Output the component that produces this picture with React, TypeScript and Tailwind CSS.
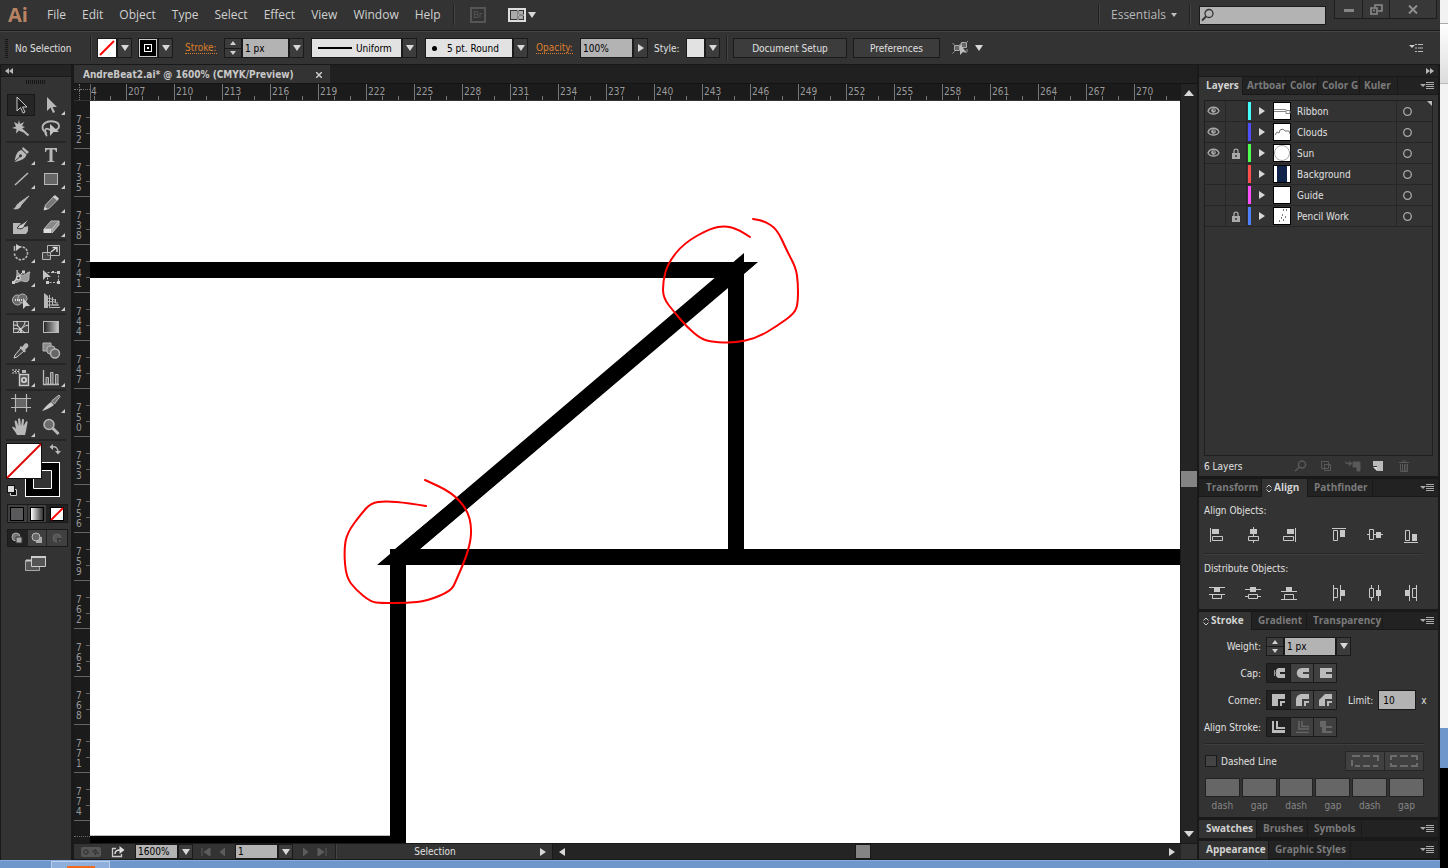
import { useState } from "react";
import type { ReactNode } from "react";

type Point = [number, number];

// Turns hand-drawn sample points into one soft curve
function smooth(points: Point[]) {
    let d = `M${points[0][0]} ${points[0][1]}`;
    for (let i = 1; i < points.length - 1; i++) {
        const [x, y] = points[i];
        const [nx, ny] = points[i + 1];
        d += ` Q${x} ${y} ${(x + nx) / 2} ${(y + ny) / 2}`;
    }
    const last = points[points.length - 1];
    return `${d} L${last[0]} ${last[1]}`;
}

const upperMark: Point[] = [
    [750, 237], [738, 229], [725, 226], [711, 228], [684, 243], [668, 263], [663, 281],
    [663, 298], [675, 313], [687, 327], [701, 339], [713, 342], [734, 343], [757, 338],
    [777, 326], [795, 313], [798, 302], [798, 283], [796, 268], [787, 251], [777, 229],
    [764, 221], [753, 219],
];

const lowerMark: Point[] = [
    [426, 506], [408, 503], [385, 501], [371, 503], [361, 514], [347, 533], [344, 550],
    [346, 577], [356, 590], [371, 602], [381, 603], [407, 603], [427, 601], [451, 591],
    [456, 581], [469, 550], [472, 528], [467, 509], [451, 492], [425, 480],
];

/* ---------- small shared pieces ---------- */

function Down({ className = "text-[#d8d8d8]" }: { className?: string }) {
    return (
        <svg width="8" height="6" viewBox="0 0 8 6" className={className} aria-hidden="true">
            <path d="M0 0h8L4 6z" fill="currentColor" />
        </svg>
    );
}

function Side({ left = false, className = "text-[#d8d8d8]" }: { left?: boolean; className?: string }) {
    return (
        <svg width="6" height="8" viewBox="0 0 6 8" className={className} aria-hidden="true">
            <path d={left ? "M6 0v8L0 4z" : "M0 0v8l6-4z"} fill="currentColor" />
        </svg>
    );
}

function DropButton({ label }: { label: string }) {
    return (
        <button
            aria-label={label}
            className="flex h-full w-[15px] shrink-0 items-center justify-center border border-[#1a1a1a] bg-[#3c3c3c]"
        >
            <Down />
        </button>
    );
}

function Stepper() {
    return (
        <span className="flex h-full w-[18px] shrink-0 flex-col border border-[#1a1a1a]">
            <button aria-label="Increase" className="flex flex-1 items-center justify-center bg-[#3c3c3c]">
                <svg width="6" height="4"><path d="M0 4h6L3 0z" fill="#d0d0d0" /></svg>
            </button>
            <button
                aria-label="Decrease"
                className="flex flex-1 items-center justify-center border-t border-[#1a1a1a] bg-[#3c3c3c]"
            >
                <svg width="6" height="4"><path d="M0 0h6L3 4z" fill="#d0d0d0" /></svg>
            </button>
        </span>
    );
}

function Divider({ className = "" }: { className?: string }) {
    return <span className={`w-px shrink-0 bg-[#1f1f1f] shadow-[1px_0_0_#444] ${className}`} />;
}

function Grip({ className = "" }: { className?: string }) {
    return <span className={`shrink-0 bg-[repeating-linear-gradient(90deg,#161616_0_1px,transparent_1px_2px)] ${className}`} />;
}

/* ---------- menu bar ---------- */

const menus = ["File", "Edit", "Object", "Type", "Select", "Effect", "View", "Window", "Help"];

function MenuBar() {
    return (
        <header className="flex h-[31px] items-center border-b border-[#1a1a1a] bg-[#333] font-['Open_Sans','Noto_Sans',sans-serif] text-xs text-[#d0d0d0]">
            <span className="w-[47px] pl-2 text-xl font-bold leading-7 text-[#b98463]">Ai</span>
            <nav className="flex gap-4">
                {menus.map((m) => (
                    <button key={m}>{m}</button>
                ))}
            </nav>
            <Divider className="ml-3 h-5" />
            <button className="ml-4 h-4 w-4 border-2 border-[#555] text-[9px] leading-[12px] text-[#5c5c5c]">Br</button>
            <button aria-label="Arrange documents" className="ml-[22px] flex items-center gap-0.5">
                <svg width="18" height="14">
                    <rect x="1" y="1" width="16" height="12" fill="#333" stroke="#ddd" strokeWidth="2" />
                    <path d="M3 3h6v8H3zM11 3h4v3h-4zM11 8h4v3h-4z" fill="#aaa" />
                    <path d="M10 1v12M10 7h7" stroke="#ddd" />
                </svg>
                <Down />
            </button>
            <div className="ml-auto flex h-full items-center">
                <Divider className="h-5" />
                <label className="flex items-center pl-3">
                    <select aria-label="Workspace" className="w-[60px] appearance-none bg-transparent text-[#b8b8b8] outline-none">
                        <option>Essentials</option>
                    </select>
                    <svg width="6" height="4"><path d="M0 0h6L3 4z" fill="#c0c0c0" /></svg>
                </label>
                <Divider className="ml-3 h-5" />
                <label className="ml-[9px] flex h-[19px] w-[127px] items-center border border-[#1a1a1a] bg-[#b3b3b3]">
                    <svg width="15" height="14" className="shrink-0">
                        <circle cx="9" cy="5.500" r="4" fill="none" stroke="#333" strokeWidth="1.300" />
                        <path d="M6 8.500l-4 4" stroke="#333" strokeWidth="1.800" />
                    </svg>
                    <input aria-label="Search" className="w-full min-w-0 bg-transparent text-[#222] outline-none" />
                </label>
                <div className="ml-2 mr-[3px] flex h-[19px] self-start border border-t-0 border-[#1d1d1d] bg-[#383838]">
                    <button aria-label="Minimize" className="flex w-7 items-center justify-center border-r border-[#1d1d1d]">
                        <svg width="12" height="10"><path d="M1 5h10v3H1z" fill="#858585" /></svg>
                    </button>
                    <button aria-label="Restore" className="flex w-[27px] items-center justify-center border-r border-[#1d1d1d]">
                        <svg width="13" height="11" fill="none" stroke="#8a8a8a" strokeWidth="1.600">
                            <path d="M5 3V1h7v6H8M1 4h6v6H1z" />
                            <path d="M3 6.500h2" />
                        </svg>
                    </button>
                    <button aria-label="Close" className="flex w-[46px] items-center justify-center">
                        <svg width="10" height="9"><path d="M1 .5l8 8M9 .5l-8 8" stroke="#8f8f8f" strokeWidth="2" /></svg>
                    </button>
                </div>
            </div>
        </header>
    );
}

/* ---------- control bar ---------- */

function ControlBar() {
    return (
        <div className="flex h-[34px] items-center border-y border-t-[#454545] border-b-[#191919] bg-[#333] pl-[5px]">
            <span className="h-[19px] w-[3px] shrink-0 bg-[repeating-linear-gradient(180deg,#161616_0_1px,transparent_1px_2px)]" />
            <span className="ml-[7px] w-[75px] shrink-0">No Selection</span>
            <Divider className="h-6" />
            <div className="ml-1.5 flex h-5">
                <button aria-label="Fill" className="border border-[#1a1a1a] bg-white">
                    <svg width="18" height="18"><path d="M2 16L16 2" stroke="#f00" strokeWidth="2" /></svg>
                </button>
                <DropButton label="Fill swatches" />
            </div>
            <div className="ml-1.5 flex h-5">
                <button aria-label="Stroke colour" className="border border-[#1a1a1a]">
                    <svg width="18" height="18">
                        <rect width="18" height="18" fill="#ccc" />
                        <rect x="1" y="1" width="16" height="16" fill="#000" />
                        <rect x="5.500" y="5.500" width="7" height="7" fill="none" stroke="#fff" />
                        <rect x="8" y="8" width="2" height="2" fill="#fff" />
                    </svg>
                </button>
                <DropButton label="Stroke swatches" />
            </div>
            <a href="#stroke" className="ml-3 w-[39px] shrink-0 leading-3 text-[#dd7e2d]">
                <span className="border-b border-dotted border-[#dd7e2d]">Stroke:</span>
            </a>
            <div className="flex h-5">
                <Stepper />
                <input
                    aria-label="Stroke weight"
                    defaultValue="1 px"
                    className="w-[47px] border border-[#1a1a1a] bg-[#b3b3b3] px-0.5 text-black outline-none"
                />
                <DropButton label="Weights" />
            </div>
            <div className="ml-[7px] flex h-5">
                <label className="flex w-[91px] items-center justify-between border border-[#1a1a1a] bg-[#e2e2e2] pl-1.5 text-black">
                    <svg width="34" height="2" className="shrink-0"><path d="M0 1h34" stroke="#000" strokeWidth="2" /></svg>
                    <select aria-label="Width profile" className="w-[45px] appearance-none bg-transparent outline-none">
                        <option>Uniform</option>
                    </select>
                </label>
                <DropButton label="Width profiles" />
            </div>
            <div className="ml-2 flex h-5">
                <label className="flex w-[88px] items-center border border-[#1a1a1a] bg-[#e2e2e2] pl-1.5 text-black">
                    <span className="h-[5px] w-[5px] rounded-full bg-black" />
                    <select aria-label="Brush" className="ml-2.5 w-[62px] appearance-none bg-transparent outline-none">
                        <option>5 pt. Round</option>
                    </select>
                </label>
                <DropButton label="Brushes" />
            </div>
            <a href="#opacity" className="ml-2 w-[44px] shrink-0 leading-3 text-[#dd7e2d]">
                <span className="border-b border-dotted border-[#dd7e2d]">Opacity:</span>
            </a>
            <div className="flex h-5">
                <input
                    aria-label="Opacity"
                    defaultValue="100%"
                    className="w-[53px] border border-[#1a1a1a] bg-[#b3b3b3] px-0.5 text-black outline-none"
                />
                <button aria-label="Opacity slider" className="flex w-[15px] items-center justify-center border border-[#1a1a1a] bg-[#3c3c3c]">
                    <Side />
                </button>
            </div>
            <span className="ml-1.5 w-8 shrink-0">Style:</span>
            <div className="flex h-5">
                <button aria-label="Graphic style" className="w-[19px] border border-[#1a1a1a] bg-[#e2e2e2]" />
                <DropButton label="Graphic styles" />
            </div>
            <Divider className="ml-1.5 h-6" />
            <button className="ml-1.5 h-5 w-[114px] shrink-0 border border-[#1a1a1a] bg-[#3c3c3c]">Document Setup</button>
            <button className="ml-1.5 h-5 w-[87px] shrink-0 border border-[#1a1a1a] bg-[#3c3c3c]">Preferences</button>
            <button aria-label="Isolate selection" className="ml-3 flex items-center gap-1.5">
                <svg width="17" height="15" fill="none">
                    <path d="M.5 2.500l2 1M.5 12.500l2-2M7 4.500l3-3M16 0l-1 1M15 8v3" stroke="#999" />
                    <path d="M9.500 1.500h5v5h-5zM2.500 4.500h5v5h-5z" fill="#666" stroke="#aaa" />
                    <path d="M8 3v11l3-3 4 1z" fill="#bbb" />
                </svg>
                <Down />
            </button>
            <button aria-label="Control menu" className="ml-auto mr-4">
                <svg width="15" height="10">
                    <path d="M0 2h6L3 5z" fill="#ccc" />
                    <path d="M6 1.500h2M9 1.500h5M6 5h2M9 5h5M6 8.500h2M9 8.500h5" stroke="#bbb" />
                </svg>
            </button>
        </div>
    );
}

/* ---------- tools ---------- */

const L = "#b8b8b8";
const D = "#6a6a6a";

interface Tool {
    name: string;
    art: ReactNode;
    more?: boolean;
}

const toolGroups: Tool[][] = [
    [
        { name: "Selection", art: <path d="M6 2v14l3.500-3.500 2.500 5.500 2-1-2.500-5H16z" fill="#1c1c1c" stroke="#c8c8c8" /> },
        { name: "Direct selection", more: true, art: <path d="M6 2v14l3.500-3.500 2.500 5.500 2-1-2.500-5H16z" fill={L} /> },
        {
            name: "Magic wand",
            art: (
                <>
                    <path d="M8 8l9.500 8.500" stroke={L} strokeWidth="2.200" />
                    <path d="M8 1l1 4 4-2-2 4 3 1-3 1.500 1 4-4-2-3 3 .5-4.500L1 9l4-1.500L3 3l4 2z" fill={L} />
                </>
            ),
        },
        {
            name: "Lasso",
            art: (
                <>
                    <path d="M6 14C1 12 0 7 4 4s14-2 14 3-8 5-11 3-4 4-1 7" fill="none" stroke={L} strokeWidth="1.800" />
                    <path d="M9 5v12l3.500-4H18z" fill="#c4c4c4" />
                </>
            ),
        },
    ],
    [
        {
            name: "Pen",
            more: true,
            art: (
                <>
                    <path d="M12 2l6 5-2 2-5-5z" fill={L} />
                    <path d="M10.500 5l5 4.500c-1 4-5 6-12 7.500 1-6 2-11 7-12z" fill={L} />
                    <path d="M3 17l6-5.500" stroke="#333" />
                    <circle cx="9.500" cy="10.800" r="1.500" fill="#333" />
                </>
            ),
        },
        { name: "Type", more: true, art: <path d="M4 3h12v4h-1c-.4-2-1-2.500-3.500-2.500v10.500c0 1 .5 1.300 2 1.300V17H6.500v-.7c1.500 0 2-.3 2-1.300V4.500C6 4.500 5.400 5 5 7H4z" fill={L} /> },
        { name: "Line segment", more: true, art: <path d="M4 16L17 4" stroke={L} strokeWidth="1.500" /> },
        { name: "Rectangle", more: true, art: <rect x="3.500" y="4.500" width="13" height="11" fill="#666" stroke={L} /> },
        {
            name: "Paintbrush",
            art: (
                <>
                    <path d="M18 3l-8 9-2-2z" fill={L} stroke={L} />
                    <path d="M8 10l2.500 2.500C9 16 5 17 2 16c3-1 3-5 6-6z" fill={L} />
                </>
            ),
        },
        {
            name: "Pencil",
            more: true,
            art: (
                <>
                    <path d="M13 3l4 3.500-9 9L3 17l1.500-5z" fill="#777" stroke={L} />
                    <path d="M14 2l4 3.500-2 2L12 4z" fill="#ccc" />
                    <path d="M3 17l1-3 2.500 2z" fill="#ddd" />
                </>
            ),
        },
        {
            name: "Blob brush",
            art: (
                <>
                    <path d="M2 6h8l-3 4h7l3-1v5l-2 3H2z" fill={L} />
                    <path d="M18 2l-7 5c-3 0-3 3-5 4 4 2 7 0 7.500-2.500z" fill="#ccc" stroke="#333" />
                </>
            ),
        },
        {
            name: "Eraser",
            more: true,
            art: (
                <>
                    <path d="M10 4h8l-7 8H3z" fill="#888" stroke="#bbb" />
                    <path d="M2.500 12h8v4h-8z" fill="#ddd" />
                    <path d="M11 12l7-8v4l-7 8z" fill="#999" stroke="#bbb" />
                </>
            ),
        },
    ],
    [
        {
            name: "Rotate",
            more: true,
            art: (
                <>
                    <path d="M8 4a6.500 6.500 0 1 1-4.500 6" fill="none" stroke={L} strokeWidth="1.600" strokeDasharray="2.500 1.200" />
                    <path d="M5 1v7l5-4z" fill="#ccc" />
                    <path d="M3.500 3v5" stroke={L} strokeWidth="1.500" />
                </>
            ),
        },
        {
            name: "Scale",
            more: true,
            art: (
                <>
                    <path d="M6.500 2.500h12v10h-12z" fill="#333" stroke={L} />
                    <path d="M1.500 9.500h8v7h-8z" fill="#555" fillOpacity=".6" stroke={L} />
                    <path d="M10 9l5-4M11.500 4.500H16V9" fill="none" stroke="#ddd" strokeWidth="1.400" />
                </>
            ),
        },
        {
            name: "Width",
            more: true,
            art: (
                <>
                    <path d="M6 3c1 4 4 6 7 5s3-3 6-3c-2 2 0 7-2 9-3 2-5-1-8 0-3 2-5 2-7 1 4-3 4-6 4-12z" fill="#999" stroke={L} />
                    <path d="M3 15L12 5" stroke="#ddd" />
                    <circle cx="7.500" cy="11" r="1.800" fill="#333" stroke="#eee" />
                    <path d="M11 3.500h3v3h-3zM1 14h3v3H1z" fill="#ccc" />
                </>
            ),
        },
        {
            name: "Free transform",
            art: (
                <>
                    <path d="M6.500 5.500h11v10h-11z" fill="none" stroke={L} strokeDasharray="2 1.500" />
                    <path d="M19 4h-3v3h3zM19 14h-3v3h3zM5 14h3v3H5zM11 4h2v2h-2z" fill="#ccc" />
                    <path d="M2 3v10l3-3h5z" fill="#c4c4c4" />
                </>
            ),
        },
        {
            name: "Shape builder",
            more: true,
            art: (
                <>
                    <circle cx="6.500" cy="9" r="5" fill={D} stroke={L} />
                    <circle cx="11.500" cy="7.500" r="4.500" fill={D} stroke={L} />
                    <path d="M4 9h9" stroke="#fff" strokeWidth="1.500" strokeDasharray="1 1" />
                    <path d="M12 7v11l3-3h4z" fill="#ccc" />
                </>
            ),
        },
        {
            name: "Perspective grid",
            more: true,
            art: (
                <>
                    <path d="M3 2l4 3v12H3z" fill={L} />
                    <path d="M8.500 4v12.500H19M11.500 6v8H18M14.500 8v4H17M3 6l11 3M3 10l11 1M3 14h14" fill="none" stroke={L} />
                </>
            ),
        },
    ],
    [
        {
            name: "Mesh",
            art: (
                <>
                    <rect x="2.500" y="4.500" width="15" height="11" fill="#444" stroke={L} />
                    <path d="M2 8c5 0 7 1 8 8M10 16c0-6 3-7 8-8M6 4c0 5 1 6 4 8M14 4c0 5-3 6-8 12M2 12c4-1 8 0 12 4" fill="none" stroke="#ddd" />
                </>
            ),
        },
        {
            name: "Gradient",
            art: (
                <>
                    <defs>
                        <linearGradient id="tool-grad">
                            <stop offset="0" stopColor="#222" />
                            <stop offset="1" stopColor="#ccc" />
                        </linearGradient>
                    </defs>
                    <rect x="2.500" y="4.500" width="15" height="11" fill="url(#tool-grad)" stroke={L} />
                </>
            ),
        },
        {
            name: "Eyedropper",
            more: true,
            art: (
                <>
                    <path d="M10 7l3 3-7 6-3 1 1-3z" fill="#444" stroke="#ccc" />
                    <path d="M14 2.500c2-1 4.500 1.500 3 3.500l-3 3 1 1-1.500 1.500L8.500 6.500 10 5l1 1z" fill={L} />
                </>
            ),
        },
        {
            name: "Blend",
            art: (
                <>
                    <path d="M2 2h8v8H2z" fill="#8a8a8a" stroke={L} />
                    <rect x="6" y="5" width="8" height="8" rx="3" fill="#777" stroke={L} />
                    <circle cx="14" cy="12.500" r="4.500" fill="#666" stroke={L} strokeWidth="1.400" />
                </>
            ),
        },
    ],
    [
        {
            name: "Symbol sprayer",
            more: true,
            art: (
                <>
                    <path d="M1 3h8M1 6h8M3 4.500h6" stroke="#ccc" strokeDasharray="2 1" />
                    <path d="M11 3h4v3h-4z" fill={L} />
                    <rect x="8.500" y="7.500" width="9" height="11" fill="#555" stroke="#ccc" strokeWidth="1.400" />
                    <circle cx="13" cy="13" r="2.200" fill="none" stroke="#ddd" strokeWidth="1.600" />
                </>
            ),
        },
        {
            name: "Column graph",
            more: true,
            art: (
                <>
                    <path d="M2.500 3v14.500H18" fill="none" stroke={L} strokeWidth="1.300" />
                    <path d="M5 10.500h2.500V17H5zM9.500 5.500H12V17H9.500zM14.500 7.500H17V17h-2.500z" fill={D} stroke={L} />
                </>
            ),
        },
    ],
    [
        {
            name: "Artboard",
            art: (
                <>
                    <rect x="4.500" y="5.500" width="11" height="9" fill={D} />
                    <path d="M4.500 1v18M15.500 1v18M0 5.500h20M0 14.500h20" stroke={L} strokeWidth="1.200" />
                    <path d="M5 6h10v8H5z" fill="#666" />
                </>
            ),
        },
        {
            name: "Slice",
            more: true,
            art: (
                <>
                    <path d="M1 18c3-4 6-7 9-9l3 3c-4 3-8 5-12 6z" fill="#ccc" />
                    <path d="M10.500 8L18 2l1 1.500-5.500 7.500z" fill="#777" stroke={L} />
                </>
            ),
        },
        {
            name: "Hand",
            more: true,
            art: <path d="M6 18c-1-3-4-5-5-8 1-.8 2.500 0 4 2L3.500 4c1-1 2-.5 2.300.5L7.500 9 7 2c1-1 2-.8 2.200.3L10 9l1-6.500c1-.8 2-.4 2 .7L12.500 9 15 4.500c1-.5 1.800 0 1.500 1.300L15 14l-1 4z" fill={L} />,
        },
        {
            name: "Zoom",
            art: (
                <>
                    <circle cx="8" cy="7.500" r="5" fill="#6d6d6d" stroke={L} strokeWidth="1.500" />
                    <path d="M11.500 11l6 6" stroke={L} strokeWidth="3" />
                </>
            ),
        },
    ],
];

function ToolPanel() {
    const [active, setActive] = useState("Selection");

    return (
        <aside className="flex w-[72px] shrink-0 flex-col border-x border-[#191919] bg-[#333]">
            <div className="flex h-3 items-center border-b border-[#191919] bg-[#242424] pl-1">
                <svg width="9" height="6"><path d="M4 0v6L0 3zM8 0v6L4 3z" fill="#b8b8b8" /></svg>
            </div>
            <div className="flex h-4 justify-center pt-[3px]">
                <Grip className="h-1 w-5" />
            </div>
            {toolGroups.map((group) => (
                <div key={group[0].name} className="mx-[5px] grid grid-cols-2 border-b-2 border-[#262626]">
                    {group.map((tool) => (
                        <button
                            key={tool.name}
                            aria-label={tool.name}
                            aria-pressed={active === tool.name}
                            onClick={() => setActive(tool.name)}
                            className="flex h-6 items-center justify-center"
                        >
                            <span
                                className={
                                    active === tool.name
                                        ? "flex h-[22px] w-7 justify-center border border-[#181818] bg-[#262626]"
                                        : "flex h-[22px] w-7 justify-center border border-transparent"
                                }
                            >
                                <svg width="28" height="20" viewBox="-4 0 28 20" fill="none" className="overflow-visible">
                                    {tool.art}
                                    {tool.more && <path d="M24 16v4h-4z" fill="#ccc" />}
                                </svg>
                            </span>
                        </button>
                    ))}
                </div>
            ))}
            <button aria-label="Fill and stroke" className="mx-[5px] mt-0.5 h-[56px]">
                <svg width="60" height="56">
                    <path d="M19 19h35v35H19z" fill="#fff" />
                    <path d="M20 20h33v33H20z" fill="#000" />
                    <path d="M27.500 27.500h18v18h-18z" fill="#333" stroke="#fff" />
                    <path d="M0 0h36v36H0z" fill="#111" />
                    <path d="M1 1h34v34H1z" fill="#fff" />
                    <path d="M1 35L35 1" stroke="#d00" strokeWidth="1.800" />
                    <path d="M46 4c4-1 6 1 6 6" fill="none" stroke={L} strokeWidth="1.300" />
                    <path d="M47 1v6l-3.500-3zM49 8h6l-3 3.500z" fill={L} />
                    <path d="M4.500 46.500h6v6h-6z" fill="#111" stroke="#ccc" />
                    <path d="M1 42h8v8H1z" fill="#111" />
                    <path d="M2 43h6v6H2z" fill="#ddd" />
                </svg>
            </button>
            <div className="ml-1.5 mr-[3px] mt-[5px] grid h-[19px] grid-cols-3 border border-[#191919] bg-[#404040]">
                <button aria-label="Color" className="flex items-center justify-center border-r border-[#222]">
                    <span className="h-3.5 w-3.5 border border-black bg-[#5a5a5d]" />
                </button>
                <button aria-label="Gradient fill" className="flex items-center justify-center border-r border-[#222]">
                    <span className="h-3.5 w-3.5 border border-black bg-gradient-to-r from-white to-[#333]" />
                </button>
                <button aria-label="None" className="flex items-center justify-center bg-[#222]">
                    <svg width="14" height="14">
                        <rect x=".5" y=".5" width="13" height="13" fill="#fff" stroke="#000" />
                        <path d="M1 13L13 1" stroke="#f00" strokeWidth="1.800" />
                    </svg>
                </button>
            </div>
            <div className="ml-1.5 mr-[3px] mt-1.5 grid h-[18px] grid-cols-3 border border-[#191919] bg-[#404040]">
                <button aria-label="Draw normal" className="flex items-center justify-center border-r border-[#222] bg-[#222]">
                    <svg width="12" height="12">
                        <circle cx="5" cy="5" r="4" fill="#777" stroke="#aaa" />
                        <path d="M5 5h6v6H5z" fill="#aaa" stroke="#333" />
                    </svg>
                </button>
                <button aria-label="Draw behind" className="flex items-center justify-center border-r border-[#222]">
                    <svg width="12" height="12">
                        <path d="M5 5h6v6H5z" fill="#aaa" />
                        <circle cx="5" cy="5" r="4" fill="#666" stroke="#bbb" />
                    </svg>
                </button>
                <button aria-label="Draw inside" className="flex items-center justify-center">
                    <svg width="12" height="12">
                        <circle cx="6" cy="6" r="4" fill="#555" stroke="#666" />
                        <path d="M6 6h4v2H8v2H6z" fill="#3a3a3a" />
                    </svg>
                </button>
            </div>
            <button aria-label="Screen mode" className="mt-2 self-center">
                <svg width="22" height="17">
                    <path d="M.5 5.500h14v10H.5z" fill="#555" stroke="#aaa" />
                    <path d="M6.500 1.500h14v10h-14z" fill="#555" stroke="#ccc" />
                    <path d="M6 2h15M1 5.500h5" stroke="#ccc" strokeWidth="2" />
                </svg>
            </button>
        </aside>
    );
}

/* ---------- document window ---------- */

const columns = Array.from({ length: 22 }, (_, i) => 207 + i * 3);
const rows = Array.from({ length: 15 }, (_, i) => 732 + i * 3);

function HorizontalRuler() {
    return (
        <div className="flex h-4 min-w-0 flex-1 overflow-hidden border-l border-[#666]">
            {/* The first label is scrolled half out of view */}
            <div className="flex w-[35px] shrink-0 items-end">
                <span className="h-4 w-[3px] leading-4">4</span>
                <span className="h-1 w-4 border-l border-[#777]" />
                <span className="h-1 w-4 border-l border-[#777]" />
            </div>
            {columns.map((n) => (
                <div key={n} className="flex w-12 shrink-0 items-end border-l border-[#777]">
                    <span className="h-4 w-[15px] pl-px leading-4">{n}</span>
                    <span className="h-1 w-4 border-l border-[#777]" />
                    <span className="h-1 w-4 border-l border-[#777]" />
                </div>
            ))}
        </div>
    );
}

function VerticalRuler() {
    return (
        <div className="relative w-4 shrink-0 overflow-hidden bg-[#1b1b1b]">
            {/* Taken out of flow so the scale never sets the window height */}
            <div className="absolute inset-x-0 top-0">
                {rows.map((n) => (
                    <div key={n} className="flex h-12 justify-between border-b border-[#666]">
                        <span className="flex flex-col pl-0.5 pt-3.5 leading-[10px]">
                            {String(n).split("").map((digit, i) => (
                                <span key={i}>{digit}</span>
                            ))}
                        </span>
                        <span className="flex w-1 flex-col pt-4">
                            <span className="h-4 border-t border-[#666]" />
                            <span className="h-4 border-t border-[#666]" />
                        </span>
                    </div>
                ))}
                <div className="h-4 border-b border-dotted border-[#666]" />
            </div>
        </div>
    );
}

function Artwork() {
    return (
        <svg className="absolute inset-0 h-full w-full bg-white">
            {/* Drawn in window coordinates, shifted to the canvas corner */}
            <g transform="translate(-90 -101)">
                <path d="M90 262h668L744 274V549h2000v16H406v280h-16V549h5L722 278H90z" fill="#000" />
                <path d="M420 549L728 288v261z" fill="#fff" />
                <path d="M744 253v12h10L401 565H377z" fill="#000" />
                <path d="M90 836h316v300H90z" fill="#000" />
                <path d="M90 835.500h300" stroke="#bbb" />
                <path d={smooth(upperMark)} fill="none" stroke="#f00" strokeWidth="2" strokeLinecap="round" />
                <path d={smooth(lowerMark)} fill="none" stroke="#f00" strokeWidth="2" strokeLinecap="round" />
            </g>
        </svg>
    );
}

function StatusBar() {
    return (
        <footer className="flex h-[17px] shrink-0 items-center border-y border-[#191919] bg-[#333]">
            <svg width="20" height="10" className="ml-[7px] shrink-0">
                <rect width="20" height="10" rx="2" fill="#555" />
                <circle cx="5" cy="5" r="2" fill="none" stroke="#2b2b2b" strokeWidth="1.500" strokeDasharray="1 .6" />
                <path d="M11 4h5l-2-2M18 6h-5l2 2" fill="none" stroke="#2b2b2b" />
            </svg>
            <button aria-label="Share" className="ml-2.5">
                <svg width="14" height="12" fill="none">
                    <path d="M5 2.500H1.500v8h9V8" stroke="#ccc" strokeWidth="1.300" />
                    <path d="M4 8c0-3 2-4 5-4" stroke="#ddd" strokeWidth="1.500" />
                    <path d="M8.500 0v8l5-4z" fill="#ddd" />
                </svg>
            </button>
            <div className="ml-2.5 flex h-full">
                <input aria-label="Zoom level" defaultValue="1600%" className="w-[43px] border border-[#1a1a1a] bg-[#b3b3b3] px-0.5 text-black outline-none" />
                <DropButton label="Zoom levels" />
            </div>
            <svg width="24" height="8" className="ml-2 shrink-0">
                <path d="M1 0v8M9 0v8L3 4zM24 0v8l-5-4z" fill="#5c5c5c" stroke="#5c5c5c" />
            </svg>
            <div className="ml-2.5 flex h-full">
                <input aria-label="Artboard" defaultValue="1" className="w-[43px] border border-[#1a1a1a] bg-[#b3b3b3] px-0.5 text-black outline-none" />
                <DropButton label="Artboards" />
            </div>
            <svg width="24" height="8" className="ml-2.5 shrink-0">
                <path d="M0 0v8l5-4zM15 0v8l6-4zM23 0v8" fill="#5c5c5c" stroke="#5c5c5c" />
            </svg>
            <Divider className="ml-2 h-full" />
            <span className="w-[198px] shrink-0 text-center leading-4">Selection</span>
            <button aria-label="Status options" className="flex w-[18px] justify-center"><Side /></button>
            <div className="flex h-full min-w-0 flex-1 items-center justify-between border-l border-[#191919] bg-[#242424] px-1.5">
                <Side left />
                <span className="mr-2 h-full w-4 border border-[#191919] bg-[#848484]" />
                <Side />
            </div>
            <span className="h-full w-4 shrink-0" />
        </footer>
    );
}

function DocumentWindow() {
    return (
        <main className="ml-0.5 flex min-w-0 flex-1 flex-col bg-[#1b1b1b]">
            <div className="flex h-[19px] shrink-0 items-stretch border-b border-[#141414] bg-[#202020]">
                <div className="flex w-64 items-center justify-between bg-[#333] pl-[9px] pr-2 pt-px font-bold text-[#c8c8c8]">
                    AndreBeat2.ai* @ 1600% (CMYK/Preview)
                    <button aria-label="Close document">
                        <svg width="6" height="6"><path d="M0 0l6 6M6 0L0 6" stroke="#ccc" strokeWidth="1.500" /></svg>
                    </button>
                </div>
            </div>
            <div className="flex min-h-0 flex-1">
                <div className="flex min-w-0 flex-1 flex-col text-[#999]">
                    <div className="flex h-[17px] shrink-0 border-b border-[#333]">
                        <span className="flex w-4 shrink-0 flex-wrap">
                            <span className="h-1.5 w-1.5 border-b border-r border-dotted border-[#777]" />
                            <span className="h-1.5 w-2.5 border-b border-dotted border-[#777]" />
                            <span className="h-2.5 w-1.5 border-r border-dotted border-[#777]" />
                        </span>
                        <HorizontalRuler />
                    </div>
                    <div className="flex min-h-0 flex-1">
                        <VerticalRuler />
                        <div className="relative min-w-0 flex-1">
                            <Artwork />
                        </div>
                    </div>
                </div>
                <div className="flex w-[17px] shrink-0 flex-col items-center justify-between border-l border-[#191919] bg-[#242424] pb-1.5 pt-1.5">
                    <svg width="10" height="6"><path d="M0 6h10L5 0z" fill="#d8d8d8" /></svg>
                    <span className="mt-[30px] h-4 w-full bg-[#848484]" />
                    <svg width="10" height="6"><path d="M0 0h10L5 6z" fill="#d8d8d8" /></svg>
                </div>
            </div>
            <StatusBar />
        </main>
    );
}

/* ---------- panel dock ---------- */

function PanelMenu() {
    return (
        <button aria-label="Panel menu" className="ml-auto mr-[3px] shrink-0">
            <svg width="15" height="8">
                <path d="M0 2h6L3 5z" fill="#aaa" />
                <path d="M6 .5h8M6 2.500h8M6 4.500h8M6 6.500h8" stroke="#aaa" />
            </svg>
        </button>
    );
}

interface Tab {
    label: string;
    width: string;
    toggle?: boolean;
}

function Tabs({ tabs, active }: { tabs: Tab[]; active: string }) {
    return (
        <div
            role="tablist"
            className="flex h-[18px] shrink-0 items-stretch border-b border-[#191919] bg-[#222] font-['Open_Sans','Noto_Sans',sans-serif]"
        >
            {tabs.map((tab) => (
                <button
                    key={tab.label}
                    role="tab"
                    aria-selected={tab.label === active}
                    className={`${tab.width} shrink-0 whitespace-nowrap border-r border-[#191919] text-left font-bold ${
                        tab.label === active ? "-mb-px bg-[#333] pb-px text-[#d2d2d2]" : "text-[#7a7a7a]"
                    }`}
                >
                    {tab.toggle && (
                        <svg width="6" height="9" className="mr-0.5 inline-block" fill="none" stroke="#ccc">
                            <path d="M.5 3.500L3 1l2.500 2.500M.5 5.500L3 8l2.500-2.500" />
                        </svg>
                    )}
                    {tab.label}
                </button>
            ))}
            <PanelMenu />
        </div>
    );
}

const layers = [
    { name: "Ribbon", color: "bg-[#4ff]", visible: true, locked: false, thumb: <path d="M0 6.500h12M0 8.500h12M12 7.500h4v3h-4z" stroke="#888" fill="none" /> },
    { name: "Clouds", color: "bg-[#4f4fff]", visible: true, locked: false, thumb: <path d="M1 11l2-3 2 1 1-3 3-1 2 2 4 0 1 3" stroke="#777" fill="none" /> },
    { name: "Sun", color: "bg-[#4fff4f]", visible: true, locked: true, thumb: <circle cx="8" cy="8" r="7.500" stroke="#aaa" fill="none" /> },
    { name: "Background", color: "bg-[#ff4f4f]", visible: false, locked: false, thumb: <path d="M3 0h10v16H3z" fill="#10234a" /> },
    { name: "Guide", color: "bg-[#ff4fff]", visible: false, locked: false, thumb: null },
    { name: "Pencil Work", color: "bg-[#4f80ff]", visible: false, locked: true, thumb: <path d="M9 2h1M12 2h1M8 7h1M11 9h1M7 10h1M9 12h1M5 13h1" stroke="#000" /> },
];

function Eye() {
    return (
        <svg width="13" height="9" fill="none">
            <path d="M1 5c2-5 9-5 11 0-2 4-9 4-11 0z" stroke="#aaa" strokeWidth="1.300" />
            <circle cx="6.500" cy="4.500" r="2.300" fill="#aaa" />
            <circle cx="7" cy="4" r=".8" fill="#333" />
        </svg>
    );
}

function Lock() {
    return (
        <svg width="8" height="11">
            <path d="M2 5V3c0-2.500 4-2.500 4 0v2" stroke="#aaa" strokeWidth="1.300" fill="none" />
            <path d="M0 5h8v6H0z" fill="#aaa" />
            <path d="M4 7v2" stroke="#333" strokeWidth="1.500" />
        </svg>
    );
}

function LayersPanel() {
    return (
        <section className="flex flex-1 flex-col bg-[#333]">
            <Tabs
                active="Layers"
                tabs={[
                    { label: "Layers", width: "w-11 pl-[7px]" },
                    { label: "Artboar", width: "w-[43px] pl-1" },
                    { label: "Color", width: "w-8 pl-1" },
                    { label: "Color G", width: "w-[42px] pl-1" },
                    { label: "Kuler", width: "w-[38px] pl-1" },
                ]}
            />
            <div className="mx-[5px] mt-[5px] flex-1 border border-[#1f1f1f]">
                <ul>
                    {layers.map((layer, i) => (
                        <li key={layer.name} className="flex h-[21px] items-stretch border-b border-[#262626]">
                            <button aria-label={`Show ${layer.name}`} className="w-[21px] border-r border-[#262626] pb-0.5 pl-0.5">
                                {layer.visible && <Eye />}
                            </button>
                            <button aria-label={`Lock ${layer.name}`} className="flex w-[21px] items-center justify-center border-r border-[#262626]">
                                {layer.locked && <Lock />}
                            </button>
                            <span className={`my-px ml-px w-[3px] ${layer.color}`} />
                            <button aria-label={`Expand ${layer.name}`} className="flex w-[22px] items-center justify-center">
                                <Side />
                            </button>
                            <svg width="18" height="18" viewBox="-1 -1 18 18" className="mt-px shrink-0">
                                <path d="M-1-1h18v18H-1z" fill="#000" />
                                <path d="M0 0h16v16H0z" fill="#fff" />
                                {layer.thumb}
                            </svg>
                            <span className="ml-1.5 flex-1 leading-[22px]">{layer.name}</span>
                            <button aria-label={`Target ${layer.name}`} className="flex w-9 items-center border-l border-[#262626] pl-1.5">
                                <svg width="9" height="9"><circle cx="4.500" cy="4.500" r="3.800" fill="none" stroke="#aaa" strokeWidth="1.300" /></svg>
                                {i === 0 && (
                                    <svg width="5" height="5" className="ml-auto self-start"><path d="M0 0h5v5z" fill="#bbb" /></svg>
                                )}
                            </button>
                        </li>
                    ))}
                </ul>
            </div>
            <div className="flex h-5 shrink-0 items-center justify-between pl-[5px] pr-7">
                <span>6 Layers</span>
                <svg width="116" height="12" fill="none" stroke="#595959">
                    <circle cx="8" cy="4.500" r="3.500" strokeWidth="1.500" />
                    <path d="M5.500 7L1 11" strokeWidth="1.500" />
                    <path d="M27.500 1.500h7v7h-7zM30.500 4.500h6v6h-6z" />
                    <path d="M52 1v2.500h5M55 1.500v4l3-2z" />
                    <path d="M59 2h7v9h-3v-4h-4z" fill="#595959" />
                    <path d="M79 1h10v10h-6v-5h-4z" fill="#bbb" stroke="none" />
                    <path d="M79 7h4v4z" fill="#ddd" stroke="none" />
                    <path d="M105 2.500h10M108 1h4M106.500 4v7.500h7V4M108.500 4v7M110.500 4v7M112 4v7" />
                </svg>
            </div>
        </section>
    );
}

const H = "#c8c8c8";

const alignIcons: { name: string; art: ReactNode }[] = [
    { name: "Align left", art: <><path d="M1.500 1v14" stroke={H} /><path d="M3 2h7v5H3z" fill={H} /><path d="M3.500 9.500h10v4h-10z" stroke={H} /></> },
    { name: "Align center", art: <><path d="M8.500 0v16" stroke={H} /><path d="M5 2h7v5H5z" fill={H} /><path d="M3.500 9.500h10v4h-10z" fill="#333" stroke={H} /></> },
    { name: "Align right", art: <><path d="M14.500 1v14" stroke={H} /><path d="M6 2h7v5H6z" fill={H} /><path d="M2.500 9.500h10v4h-10z" stroke={H} /></> },
    { name: "Align top", art: <><path d="M1 1.500h14" stroke={H} /><path d="M9 3h5v7H9z" fill={H} /><path d="M2.500 3.500h4v10h-4z" stroke={H} /></> },
    { name: "Align middle", art: <><path d="M0 7.500h16" stroke={H} /><path d="M9 5h5v6H9z" fill={H} /><path d="M2.500 2.500h4v10h-4z" fill="#333" stroke={H} /></> },
    { name: "Align bottom", art: <><path d="M1 15.500h14" stroke={H} /><path d="M9 7h5v7H9z" fill={H} /><path d="M2.500 3.500h4v10h-4z" stroke={H} /></> },
];

const distributeIcons: { name: string; art: ReactNode }[] = [
    { name: "Distribute top", art: <><path d="M0 2.500h16M0 9.500h16" stroke={H} /><path d="M5 3h6v4H5z" fill={H} /><path d="M3.500 9.500h9v4h-9z" stroke={H} /></> },
    { name: "Distribute middle", art: <><path d="M0 4.500h16M0 11.500h16" stroke={H} /><path d="M5 2h6v5H5z" fill={H} /><path d="M3.500 9.500h9v4h-9z" fill="#333" stroke={H} /></> },
    { name: "Distribute bottom", art: <><path d="M0 6.500h16M0 14.500h16" stroke={H} /><path d="M5 2h6v4H5z" fill={H} /><path d="M3.500 9.500h9v5h-9z" stroke={H} /></> },
    { name: "Distribute left", art: <><path d="M2.500 0v16M9.500 0v16" stroke={H} /><path d="M10 5h4v6h-4z" fill={H} /><path d="M2.500 3.500h4v9h-4z" stroke={H} /></> },
    { name: "Distribute center", art: <><path d="M4.500 0v16M11.500 0v16" stroke={H} /><path d="M9 5h5v6H9z" fill={H} /><path d="M2.500 3.500h4v9h-4z" fill="#333" stroke={H} /></> },
    { name: "Distribute right", art: <><path d="M6.500 0v16M13.500 0v16" stroke={H} /><path d="M2 5h4v6H2z" fill={H} /><path d="M9.500 3.500h4v9h-4z" stroke={H} /></> },
];

function IconRow({ icons }: { icons: { name: string; art: ReactNode }[] }) {
    return (
        <div className="flex gap-3.5">
            {[icons.slice(0, 3), icons.slice(3)].map((half) => (
                <div key={half[0].name} className="flex">
                    {half.map((icon) => (
                        <button key={icon.name} aria-label={icon.name} className="flex w-9 justify-center">
                            <svg width="16" height="16" fill="none">{icon.art}</svg>
                        </button>
                    ))}
                </div>
            ))}
        </div>
    );
}

function AlignPanel() {
    return (
        <section className="bg-[#333] pb-2">
            <Tabs
                active="Align"
                tabs={[
                    { label: "Transform", width: "w-[63px] pl-[7px]" },
                    { label: "Align", width: "w-[46px] pl-1", toggle: true },
                    { label: "Pathfinder", width: "w-[65px] pl-1.5" },
                ]}
            />
            <h3 className="pl-[5px] pt-[7px] leading-[14px]">Align Objects:</h3>
            <div className="mt-[9px]">
                <IconRow icons={alignIcons} />
            </div>
            <div className="ml-[5px] mr-4 mt-2.5 h-0.5 border-b border-[#3e3e3e] bg-[#262626]" />
            <h3 className="pl-[5px] pt-[7px] leading-[14px]">Distribute Objects:</h3>
            <div className="mt-[9px]">
                <IconRow icons={distributeIcons} />
            </div>
        </section>
    );
}

const capArt = [
    <g key="a">
        <path d="M7 1h7v4H9v2h5v4H7L5 9V3z" fill="#bbb" />
        <path d="M3.500 3v6M3 6h3" stroke="#999" />
    </g>,
    <path key="b" d="M7 1h7v4H8v2h6v4H7C0 11 0 1 7 1z" fill="#bbb" />,
    <path key="c" d="M2 1h12v4H8v2h6v4H2z" fill="#bbb" />,
];

const cornerArt = [
    <path key="a" d="M1 0h13v5H7v7H1zM9 7h5v2h-3v3H9z" fill="#bbb" />,
    <path key="b" d="M1 12V6c0-4 3-6 6-6h7v5H7v7zM9 7h5v2h-3v3H9z" fill="#bbb" />,
    <path key="c" d="M1 12V6l6-6h7v5H7v7zM9 7h5v2h-3v3H9z" fill="#bbb" />,
];

const alignStrokeArt = [
    <path key="a" d="M1 0h2v9h11v3H1zM5 0h2v6h7v2H5z" fill="#bbb" />,
    <path key="b" d="M4 0v8h10M1 11.500h13M7 0v5.500h7" stroke="#666" strokeWidth="1.500" />,
    <path key="c" d="M2 0h6v5h6v2H8v3h6v2H4V6H2z" fill="#666" />,
];

function ButtonTriple({ name, art }: { name: string; art: ReactNode[] }) {
    return (
        <div role="group" aria-label={name} className="flex h-5 border border-[#1a1a1a]">
            {art.map((drawing, i) => (
                <button
                    key={i}
                    aria-label={`${name} ${i + 1}`}
                    className={`flex w-[23px] items-center justify-center ${
                        i === 0 ? "bg-[#222]" : "border-l border-[#1a1a1a] bg-[#404040]"
                    }`}
                >
                    <svg width="15" height="12" fill="none">
                        {drawing}
                    </svg>
                </button>
            ))}
        </div>
    );
}

function StrokePanel() {
    const [dashed, setDashed] = useState(false);
    const rowLabel = "w-[62px] shrink-0 text-right";

    return (
        <section className="bg-[#333] pb-[3px]" id="stroke">
            <Tabs
                active="Stroke"
                tabs={[
                    { label: "Stroke", width: "w-[53px] pl-1", toggle: true },
                    { label: "Gradient", width: "w-[55px] pl-1.5" },
                    { label: "Transparency", width: "w-[76px] pl-1.5" },
                ]}
            />
            <div className="flex flex-col gap-[7px] pt-1.5">
                <div className="flex h-5 items-center gap-[5px]">
                    <label htmlFor="weight" className={rowLabel}>Weight:</label>
                    <div className="flex h-[19px]">
                        <Stepper />
                        <input id="weight" defaultValue="1 px" className="w-[52px] border border-[#1a1a1a] bg-[#b3b3b3] px-0.5 text-black outline-none" />
                        <DropButton label="Stroke weights" />
                    </div>
                </div>
                <div className="flex items-center gap-[5px]">
                    <span className={rowLabel}>Cap:</span>
                    <ButtonTriple name="Cap" art={capArt} />
                </div>
                <div className="flex items-center gap-[5px]">
                    <span className={rowLabel}>Corner:</span>
                    <ButtonTriple name="Corner" art={cornerArt} />
                    <label htmlFor="limit" className="ml-1.5">Limit:</label>
                    <input id="limit" defaultValue="10" className="h-5 w-[38px] border border-[#1a1a1a] bg-[#b3b3b3] px-1 text-black outline-none" />
                    <span>x</span>
                </div>
                <div className="flex items-center gap-[5px]">
                    <span className={`${rowLabel} whitespace-nowrap`}>Align Stroke:</span>
                    <ButtonTriple name="Align stroke" art={alignStrokeArt} />
                </div>
            </div>
            <div className="ml-[5px] mr-3.5 mt-1.5 h-0.5 border-b border-[#3e3e3e] bg-[#262626]" />
            <div className="mt-1.5 flex items-center justify-between pl-[6px] pr-3.5">
                <label className="flex items-center gap-1">
                    <input
                        type="checkbox"
                        checked={dashed}
                        onChange={(e) => setDashed(e.target.checked)}
                        className="h-3 w-3 appearance-none border border-[#1a1a1a] bg-[#444] checked:bg-[#aaa]"
                    />
                    Dashed Line
                </label>
                <div className="flex h-5 border border-[#262626] bg-[#404040]">
                    <button aria-label="Preserve exact dashes" className="flex w-[39px] items-center justify-center border-r border-[#262626]">
                        <svg width="28" height="12"><path d="M1 11V5M1 1h8M12 1h7M22 1h5v5M4 11h5M12 11h7M22 11h5" fill="none" stroke="#6c6c6c" strokeWidth="2" /></svg>
                    </button>
                    <button aria-label="Align dashes to corners" className="flex w-[38px] items-center justify-center">
                        <svg width="28" height="12"><path d="M1 5V1h6M10 1h8M21 1h6v4M27 8v3h-6M18 11h-8M7 11H1V8" fill="none" stroke="#6c6c6c" strokeWidth="2" /></svg>
                    </button>
                </div>
            </div>
            <div className="mt-[7px] grid grid-cols-6 gap-0.5 pl-[6px] pr-3.5">
                {["dash", "gap", "dash", "gap", "dash", "gap"].map((label, i) => (
                    <label key={i} className="flex min-w-0 flex-col gap-px text-center leading-4 text-[#858585]">
                        <input disabled className="h-[19px] w-full border border-[#222] bg-[#666]" />
                        {label}
                    </label>
                ))}
            </div>
        </section>
    );
}

function Dock() {
    return (
        <aside className="flex w-[243px] shrink-0 flex-col gap-[3px] border-x-2 border-[#191919] bg-[#191919] pb-px text-[#e0e0e0]">
            <div className="flex flex-1 flex-col">
                <div className="flex h-3 shrink-0 items-center justify-end border-b border-[#191919] bg-[#242424] pr-1">
                    <svg width="8" height="6"><path d="M0 0v6l4-3zM4 0v6l4-3z" fill="#b8b8b8" /></svg>
                </div>
                <LayersPanel />
            </div>
            <AlignPanel />
            <StrokePanel />
            <Tabs
                active="Swatches"
                tabs={[
                    { label: "Swatches", width: "w-[58px] pl-[7px]" },
                    { label: "Brushes", width: "w-[51px] pl-1.5" },
                    { label: "Symbols", width: "w-[54px] pl-1.5" },
                ]}
            />
            <Tabs
                active="Appearance"
                tabs={[
                    { label: "Appearance", width: "w-[70px] pl-[7px]" },
                    { label: "Graphic Styles", width: "w-[82px] pl-1.5" },
                ]}
            />
        </aside>
    );
}

export default function App() {
    return (
        <div className="flex min-h-screen bg-[#6f97cb] font-['DejaVu_Sans_Condensed','DejaVu_Sans',sans-serif] text-[10px] text-[#e0e0e0]">
            <div className="flex min-w-0 flex-1 flex-col">
                <MenuBar />
                <ControlBar />
                <div className="flex flex-1 bg-[#191919]">
                    <ToolPanel />
                    <DocumentWindow />
                    <Dock />
                </div>
                {/* Sliver of the desktop taskbar */}
                <div className="flex h-2 shrink-0 border-t border-[#8aaedb] bg-[#6f97cb]">
                    <div className="ml-[51px] flex w-[59px] justify-center border-x border-t border-[#bdd0ea] bg-[#8eaedb]">
                        <span className="mt-1 w-7 border-2 border-b-0 border-[#f26a1b] bg-[#4a1d06]" />
                    </div>
                </div>
            </div>
            {/* Windows behind the application */}
            <div className="flex w-2 shrink-0 flex-col">
                <div className="h-6 border-b border-[#aaa] bg-[#f2f2f2]" />
                <div className="h-[60px] border-b border-[#bbb] bg-gradient-to-b from-white to-[#dcdcdc]" />
                <div className="flex-1 bg-[#f3f3f3]" />
                <div className="h-10 bg-[#6f97cb]" />
                <div className="h-[100px] bg-black" />
            </div>
        </div>
    );
}
